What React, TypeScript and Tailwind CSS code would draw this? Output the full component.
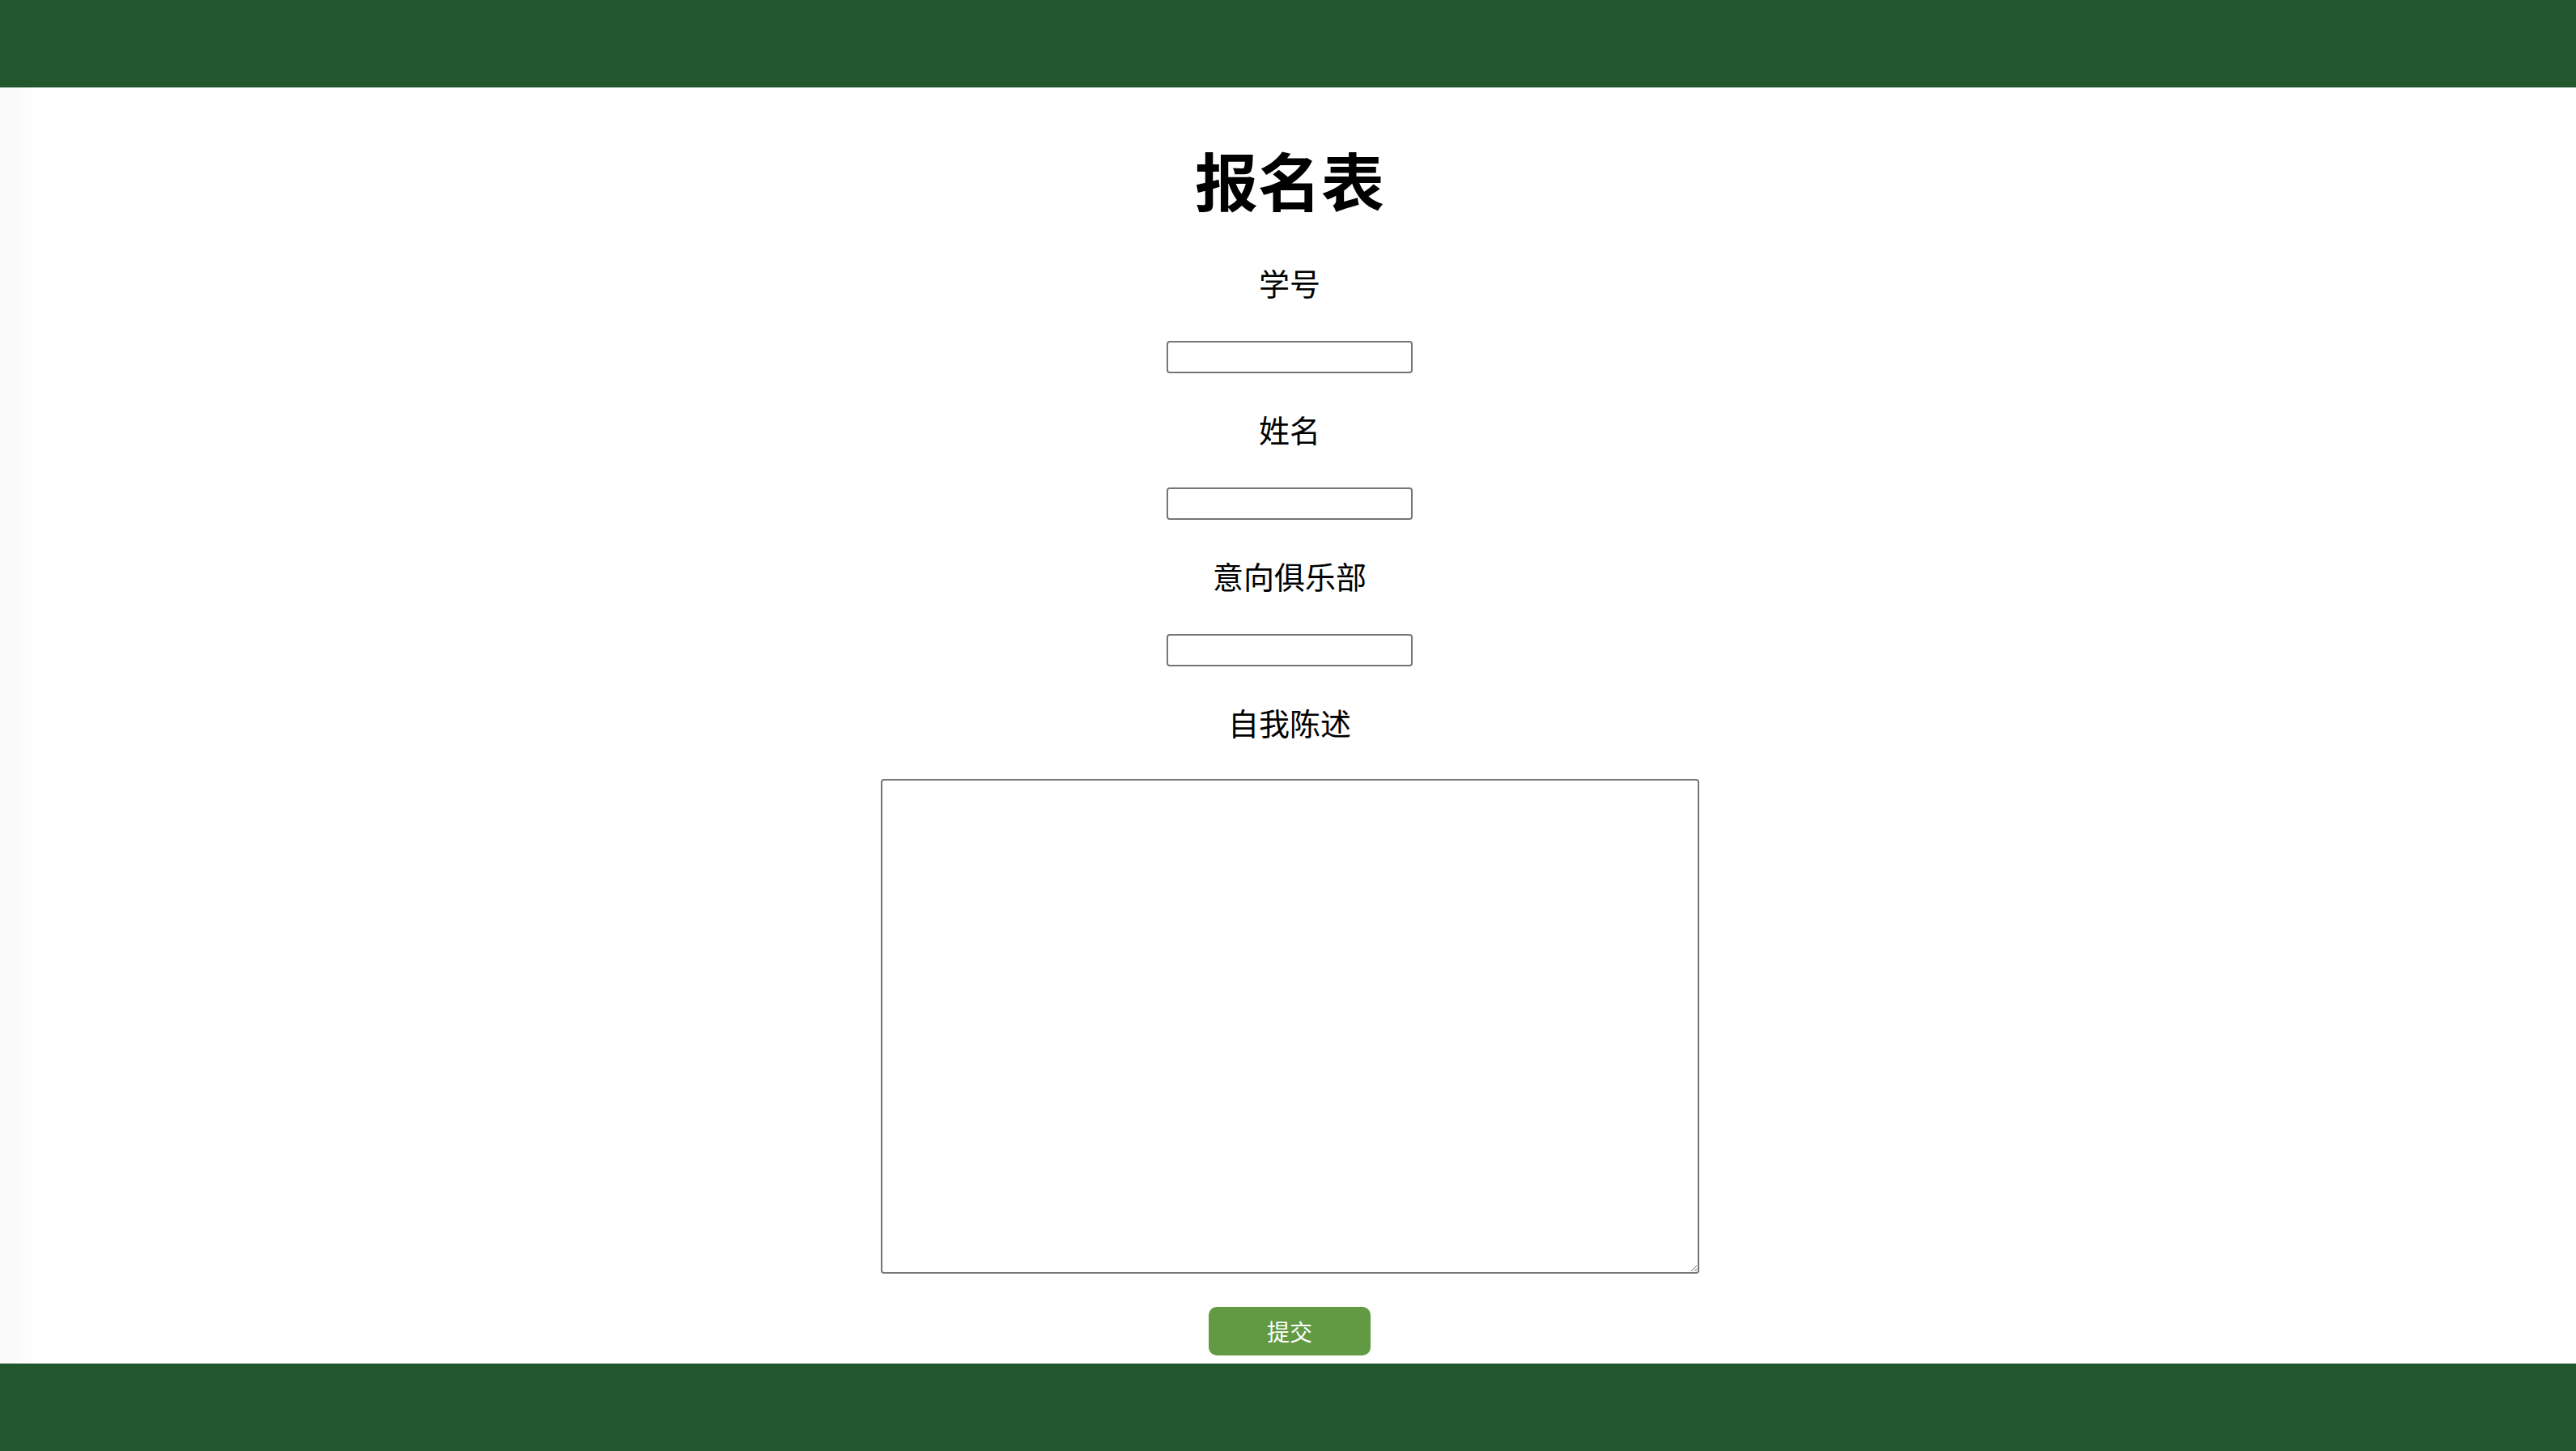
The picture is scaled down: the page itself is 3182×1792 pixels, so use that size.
import React, { useState } from "react";

const fields = [
  { key: "sid", label: "学号" },
  { key: "name", label: "姓名" },
  { key: "club", label: "意向俱乐部" },
];

function App() {
  const [form, setForm] = useState<any>({});
  const update = (key: string, value: string) =>
    setForm((prev: any) => ({ ...prev, [key]: value }));

  return (
    <div
      className="flex h-screen flex-col text-black"
      style={{ fontFamily: '"Noto Sans CJK SC", "Noto Sans", sans-serif' }}
    >
      <header className="h-[108px] shrink-0 bg-[#23562c]" />
      <main className="flex flex-1 flex-col items-center pl-[4px] bg-[linear-gradient(to_right,#fafafa_22px,#fcfcfc_22px,#fcfcfc_40px,#ffffff_40px)]">
        <h1 className="mt-[74px] text-[78px] font-bold leading-none">报名表</h1>
        {fields.map((f, i) => (
          <React.Fragment key={f.key}>
            <label
              htmlFor={f.key}
              className={
                (i === 0 ? "mt-[61px] " : "mt-[41px] ") +
                "flex h-[56px] items-center text-[38px] leading-none"
              }
            >
              {f.label}
            </label>
            <input
              id={f.key}
              value={form[f.key] || ""}
              onChange={(e) => update(f.key, e.target.value)}
              className="mt-[44px] h-[40px] w-[304px] rounded-[4px] border-2 border-[#767676] bg-white px-2 text-[26px] outline-none"
            />
          </React.Fragment>
        ))}
        <label
          htmlFor="intro"
          className="mt-[41px] flex h-[56px] items-center text-[38px] leading-none"
        >
          自我陈述
        </label>
        <textarea
          id="intro"
          value={form.intro || ""}
          onChange={(e) => update("intro", e.target.value)}
          className="mt-[42px] h-[611px] w-[1011px] rounded-[4px] border-2 border-[#767676] bg-white p-2 text-[26px] outline-none"
        />
        <button className="mt-[41px] h-[60px] w-[200px] rounded-[10px] bg-[#619a43] text-[28px] text-white">
          提交
        </button>
      </main>
      <footer className="h-[108px] shrink-0 bg-[#23562c]" />
    </div>
  );
}

export default App;
